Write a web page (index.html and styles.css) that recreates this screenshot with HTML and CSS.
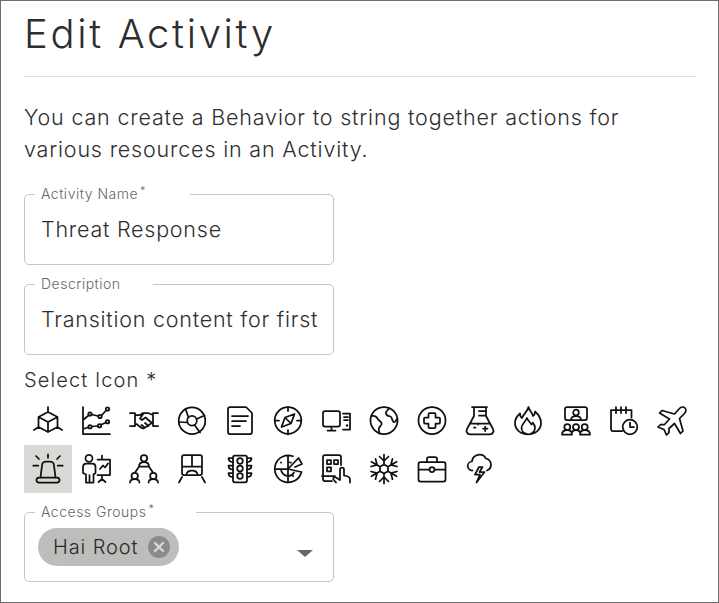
FILE: index.html
```html
<!DOCTYPE html>
<html lang="en">
<head>
<meta charset="utf-8">
<title>Edit Activity</title>
<link rel="stylesheet" href="styles.css">
</head>
<body>
<main class="panel">
  <h1 class="title">Edit Activity</h1>
  <hr class="rule">
  <p class="intro">You can create a Behavior to string together actions for various resources in an Activity.</p>

  <fieldset class="field field-name">
    <legend class="legend legend-name">Activity Name<sup class="req">*</sup></legend>
    <input class="input" type="text" value="Threat Response" aria-label="Activity Name">
  </fieldset>

  <fieldset class="field field-desc">
    <legend class="legend legend-desc">Description</legend>
    <input class="input" type="text" value="Transition content for first responders" aria-label="Description">
  </fieldset>

  <div class="select-label">Select Icon *</div>
  <div class="icons">
    <div class="cell"><svg class="ico" viewBox="0 0 32 32"><path d="M16 7l9.5 5v10L16 27l-9.5-5V12zM6.500 12l9.500 5 9.500-5M16 17v10M16 2v5M6.500 22L2 25M25.500 22L30 25"/></svg></div>
    <div class="cell"><svg class="ico" viewBox="0 0 32 32"><path d="M3 2v27h27M3 15l5.500-4.500M11.500 9.500l6.500 1.500M21.500 10.500l4.500-5M3 24l5-1.500M12 21.500l5.500-.5M21.500 19.500l4.500-2"/><circle cx="10" cy="9" r="1.700"/><circle cx="20" cy="11.500" r="1.700"/><circle cx="27.500" cy="4" r="1.700"/><circle cx="10" cy="21.700" r="1.700"/><circle cx="19.500" cy="20.700" r="1.700"/><circle cx="27.500" cy="16.700" r="1.700"/></svg></div>
    <div class="cell"><svg class="ico" viewBox="0 0 32 32"><path d="M2 8h5v13H2M30 8h-5v13h5M7 10h5l3-2h5l5 2M7 19h1.500l5 4 2 .5 4-2.500 5-3.500M15.500 8.500l-3.500 5 2 1.500 3.500-2.500 6.500 5.500M13.500 20l3 2.500M17 18l3.500 3"/></svg></div>
    <div class="cell"><svg class="ico" viewBox="0 0 32 32"><circle cx="16" cy="15.700" r="13.300"/><circle cx="16" cy="15.700" r="4.800"/><path d="M12.500 12.500L9.500 4M20.500 14l8-3.500M18.500 20l5.500 7.500M11.500 17.500L3 17"/></svg></div>
    <div class="cell"><svg class="ico" viewBox="0 0 32 32"><path d="M6 2h16l6 6v19a2 2 0 0 1-2 2H6a2 2 0 0 1-2-2V4a2 2 0 0 1 2-2zM8 11h16M8 16h14M8 21h8"/></svg></div>
    <div class="cell"><svg class="ico" viewBox="0 0 32 32"><circle cx="16" cy="15.500" r="13.300"/><path d="M16 2v4M16 25v4.500M3 15.500h4M25 15.500h4M22.500 9l-3.500 9.500L9.500 22 13 12.500zM13 12.500l6 6"/></svg></div>
    <div class="cell"><svg class="ico" viewBox="0 0 32 32"><path d="M5 6h13a2 2 0 0 1 2 2v11.500a2 2 0 0 1-2 2H5a2 2 0 0 1-2-2V8a2 2 0 0 1 2-2zM11.500 21.500V25M7.500 25.500h8M23 8.500h7v16h-7M24 12h4M24 15h4"/><circle class="dot" cx="27" cy="20.500" r="1.200"/></svg></div>
    <div class="cell"><svg class="ico" viewBox="0 0 32 32"><circle cx="16" cy="15.500" r="13.500"/><path d="M3.500 11c3-.5 5 .5 6 2.500s3 2.500 4 4.500-1.500 3-2.500 5c-.5 1.500 0 4 .5 5.500M21 3.500c-1.500 2-3.500 2.500-3 5s3 2.500 4.500 3 1.500 4 3 5.500c1 .5 2.500-1 3.500-3"/></svg></div>
    <div class="cell"><svg class="ico" viewBox="0 0 32 32"><circle cx="16" cy="15.500" r="13.500"/><path d="M13.500 8h5a1 1 0 0 1 1 1v3.500H23a1 1 0 0 1 1 1v4a1 1 0 0 1-1 1h-3.500V22a1 1 0 0 1-1 1h-5a1 1 0 0 1-1-1v-3.500H9a1 1 0 0 1-1-1v-4a1 1 0 0 1 1-1h3.500V9a1 1 0 0 1 1-1z"/></svg></div>
    <div class="cell"><svg class="ico" viewBox="0 0 32 32"><path d="M8 2h15M10 2v9L3 24a3.500 3.500 0 0 0 3 5.300h20a3.500 3.500 0 0 0 3-5.300l-7-13V2M15 6h7M15 10.500h7M6.500 18.500h19M19 23.500h4.500M21.200 21.500v4.500M10 22.500h1.500M14 19.500v.1"/></svg></div>
    <div class="cell"><svg class="ico" viewBox="0 0 32 32"><path d="M16.500 2c1 4 3.500 5 4.500 9 1.500-1 2-3 2-4.500 3.500 3 6 7 6 11.500 0 6.500-5.500 11.300-13 11.300S3 24.500 3 18c0-4 2-7 5-9.500 0 2 .5 3.500 2 4.500 1.500-4.500 5.500-6 6.500-11zM15.500 29c-3.500-.5-6-3-6-6 0-4 4-6 5.500-10 1 3 3 4 4.500 6.500.5-.5 1-1 1.200-1.800 1.500 1.500 2.300 3.300 2.300 5.300 0 3-2.500 5.500-5 6"/></svg></div>
    <div class="cell"><svg class="ico" viewBox="0 0 32 32"><path d="M7 2h18a2 2 0 0 1 2 2v9a2 2 0 0 1-2 2H7a2 2 0 0 1-2-2V4a2 2 0 0 1 2-2zM11 15c0-3 2-4 5-4s5 1 5 4M2 29.500c0-3 2-4.500 5.200-4.500s4.800 1.500 4.800 4.500zM11.500 29.500c0-3 1.500-4.500 4.500-4.500s4.500 1.500 4.500 4.500M20 29.500c0-3 1.800-4.500 4.800-4.500s5.200 1.500 5.200 4.500z"/><circle cx="16" cy="7.500" r="2.800"/><circle cx="7.300" cy="22" r="3"/><circle cx="16" cy="22" r="3"/><circle cx="24.700" cy="22" r="3"/></svg></div>
    <div class="cell"><svg class="ico" viewBox="0 0 32 32"><path d="M23.500 12.500V5H3v19a2 2 0 0 0 2 2h9.500M8 2v6M13 2v6M18 2v6M22 17.500V22h4"/><circle cx="22" cy="22" r="7.300"/></svg></div>
    <div class="cell"><svg class="ico" viewBox="0 0 32 32"><path d="M29 3c-1.500-1.500-4-1-5.500.5L18.500 9 6 5.500 3.500 8l10 6-5 5.500H4.500L2 22l6 2.500L10.500 30l2.500-2.500v-4l5.500-5 6 10 2.500-2.500-3.500-12.500 5-5C30 7 30.500 4.500 29 3z"/></svg></div>

    <div class="cell cell-active"><svg class="ico" viewBox="0 0 32 32"><rect x="4.500" y="24.500" width="23" height="5" rx="2.500"/><path d="M8.500 24.500l1.500-12a4 4 0 0 1 4-4h4a4 4 0 0 1 4 4l1.500 12M16 1.300v3.500M4 3l3 3M28 3l-3 3M1.300 12.700h5M25.700 12.700h5"/></svg></div>
    <div class="cell"><svg class="ico" viewBox="0 0 32 32"><circle cx="9" cy="5.300" r="3.500"/><path d="M3 20v-6c0-2 1.500-3.500 3.500-3.500h6c2 0 3 1.500 3 3.500v6l-2 1.500V29.500H6v-8zM9.500 22v7.500M17.500 6.500H30V22H17.500M22 2.500v4M22 22v4M18.500 29l3.500-3 3.500 3M20 16l3-3.500 2 2 3-4"/></svg></div>
    <div class="cell"><svg class="ico" viewBox="0 0 32 32"><circle cx="16" cy="5.300" r="3.200"/><circle cx="6.700" cy="23" r="3.200"/><circle cx="25.300" cy="23" r="3.200"/><path d="M11 13.700c0-3 2-4.500 5-4.500s5 1.500 5 4.500zM11 13.700L7 19.500M21 13.700l4 5.800M2 29.500c0-2.500 2-3.500 4.700-3.500s4.700 1 4.700 3.500M20.600 29.500c0-2.500 2-3.500 4.700-3.500s4.700 1 4.700 3.500"/></svg></div>
    <div class="cell"><svg class="ico" viewBox="0 0 32 32"><path d="M8 2h16a2 2 0 0 1 2 2v16a2 2 0 0 1-2 2H8a2 2 0 0 1-2-2V4a2 2 0 0 1 2-2zM16 2v11.500M6 13.500h20M10.500 22c0-3 2-4.500 5.500-4.500s5.500 1.500 5.500 4.500M6 24l-3 5.500M26 24l3 5.500"/></svg></div>
    <div class="cell"><svg class="ico" viewBox="0 0 32 32"><rect x="9" y="2.700" width="14" height="26.600" rx="2"/><circle cx="16" cy="8" r="2.800"/><circle cx="16" cy="15.500" r="2.800"/><circle cx="16" cy="23" r="2.800"/><path d="M9 5H4.500c0 2 1.500 4 4.500 4M9 12.500H4.500c0 2 1.500 4 4.500 4M9 20H4.500c0 2 1.500 4 4.500 4M23 5h4.500c0 2-1.500 4-4.500 4M23 12.500h4.500c0 2-1.500 4-4.500 4M23 20h4.500c0 2-1.500 4-4.500 4"/></svg></div>
    <div class="cell"><svg class="ico" viewBox="0 0 32 32"><path d="M21 3.300A13.500 13.500 0 1 0 29.400 19M16 2.500v27M3 16h13M16 16L26.500 5 30 11l-7 3M16 16l13.500 3M16 9a7 7 0 0 1 3 .7M9 16a7 7 0 0 0 7 7 7 7 0 0 0 6-3.500"/><circle class="dot" cx="9" cy="9.500" r="1"/><circle class="dot" cx="21" cy="23" r="1"/></svg></div>
    <div class="cell"><svg class="ico" viewBox="0 0 32 32"><path d="M21 12V4a2 2 0 0 0-2-2H5a2 2 0 0 0-2 2v22a2 2 0 0 0 2 2h7M2 23h13M16 29.500l-2.500-3c-1-1.500.5-3 2.500-2l4 2.500V16.500a2 2 0 0 1 4 0v6l4 1c1.500.5 2 1.500 2 3v3"/><rect x="7" y="7" width="4" height="4"/><rect x="14" y="7" width="4" height="4"/><rect x="7" y="14.300" width="4" height="4"/></svg></div>
    <div class="cell"><svg class="ico" viewBox="0 0 32 32"><path d="M16 1.500v10M11.500 3.500l4.500 4.500 4.500-4.500M16 30.500v-10M11.500 28.500l4.500-4.500 4.500 4.500M3.400 8.700l8.700 5M3 13.500l6.100-1.600-1.600-6.100M28.600 23.300l-8.700-5M29 18.500l-6.100 1.600 1.600 6.100M3.400 23.300l8.700-5M3 18.500l6.100 1.600-1.600 6.100M28.600 8.700l-8.700 5M29 13.500l-6.100-1.600 1.600-6.100M16 11.500l4 2.300v4.400l-4 2.300-4-2.300v-4.400z"/></svg></div>
    <div class="cell"><svg class="ico" viewBox="0 0 32 32"><rect x="2.500" y="9" width="27" height="19.500" rx="2"/><circle cx="16" cy="16.500" r="2.500"/><path d="M11 9V6a2 2 0 0 1 2-2h6a2 2 0 0 1 2 2v3M2.500 16.500H13.500M18.500 16.500h11"/></svg></div>
    <div class="cell"><svg class="ico" viewBox="0 0 32 32"><path d="M8.500 17.500a4.500 4.500 0 0 1-.5-9 7.500 7.500 0 0 1 14-3 6.300 6.300 0 0 1 1 12M15 14l-4 7.500h5l-3.500 8 8-10.500h-5l3-5z"/></svg></div>
  </div>

  <fieldset class="field field-groups">
    <legend class="legend legend-groups">Access Groups<sup class="req">*</sup></legend>
    <div class="select">
      <span class="chip">Hai Root
        <svg class="chip-x" viewBox="0 0 22 22"><circle class="chip-disc" cx="11" cy="11" r="11"/><path class="chip-cross" d="M7 7l8 8M15 7l-8 8"/></svg>
      </span>
      <span class="arrow"></span>
    </div>
  </fieldset>
</main>
</body>
</html>
```
FILE: styles.css
```css
* { box-sizing: border-box; }
html, body { margin: 0; padding: 0; background: #fff; }
body { font-family: Inter, "Liberation Sans", sans-serif; color: #2e2e2e; }

.panel {
  width: 719px;
  height: 603px;
  border: 1px solid #6e6e6e;
  padding: 0 22px 0 23px;
  overflow: hidden;
}
.title {
  margin: 9px 0 0;
  font-size: 40px;
  line-height: 48px;
  font-weight: 300;
  letter-spacing: 2.65px;
}
.rule {
  margin: 18px 0 0;
  border: 0;
  border-top: 1px solid #dedede;
}
.intro {
  margin: 24px 0 0;
  font-size: 21.5px;
  line-height: 32px;
  font-weight: 300;
  letter-spacing: 0.82px;
  width: 620px;
}
.field {
  margin: 0;
  padding: 0;
  border: 1px solid #c6c6c6;
  border-radius: 5px;
  width: 310px;
  min-width: 0;
  height: 80px;
}
.field-name { margin-top: 20px; }
.field-desc { margin-top: 10px; }
.field-groups { margin-top: 10px; height: 79px; }
.legend {
  margin-left: 10px;
  padding: 0 6px;
  font-size: 14px;
  line-height: 18px;
  font-weight: 300;
  letter-spacing: 0.5px;
  color: #666;
  white-space: nowrap;
}
.legend-name { padding-right: 44px; }
.legend-desc { padding-right: 32px; }
.legend-groups { padding-right: 42px; }
.req { font-size: 11px; line-height: 0; margin-left: 2px; vertical-align: 4px; }
.input {
  display: block;
  width: 277px;
  margin: 10px 0 0 16px;
  padding: 0;
  border: 0;
  outline: 0;
  background: transparent;
  font: 300 21.5px/32px Inter, "Liberation Sans", sans-serif;
  letter-spacing: 0.76px;
  color: #2e2e2e;
}
.select-label {
  margin-top: 11px;
  font-size: 20px;
  line-height: 28px;
  font-weight: 300;
  letter-spacing: 1.1px;
}
.icons {
  display: flex;
  flex-wrap: wrap;
  width: 672px;
  margin-top: 3px;
}
.cell {
  width: 48px;
  height: 48px;
  display: flex;
  align-items: center;
  justify-content: center;
}
.cell-active { background: #d9dad6; }
.ico {
  width: 32px;
  height: 32px;
  fill: none;
  stroke: #111;
  stroke-width: 1.75;
  stroke-linecap: round;
  stroke-linejoin: round;
}
.dot { fill: #111; stroke: none; }
.select {
  display: flex;
  align-items: flex-start;
  justify-content: space-between;
  padding: 7px 20px 0 13px;
}
.chip {
  display: inline-flex;
  align-items: center;
  gap: 10px;
  height: 38px;
  padding: 0 0 0 15px;
  width: 141px;
  border-radius: 19px;
  background: #bdbdbc;
  font-size: 20px;
  font-weight: 300;
  letter-spacing: 0.9px;
  color: #2a2a2a;
  white-space: nowrap;
}
.chip-x { width: 22px; height: 22px; flex: none; }
.chip-disc { fill: #8b8b8b; }
.chip-cross { stroke: #d8d8d8; stroke-width: 2.4; stroke-linecap: round; fill: none; }
.arrow {
  margin-top: 22px;
  width: 0;
  height: 0;
  border-left: 8px solid transparent;
  border-right: 8px solid transparent;
  border-top: 7px solid #666;
}
```
